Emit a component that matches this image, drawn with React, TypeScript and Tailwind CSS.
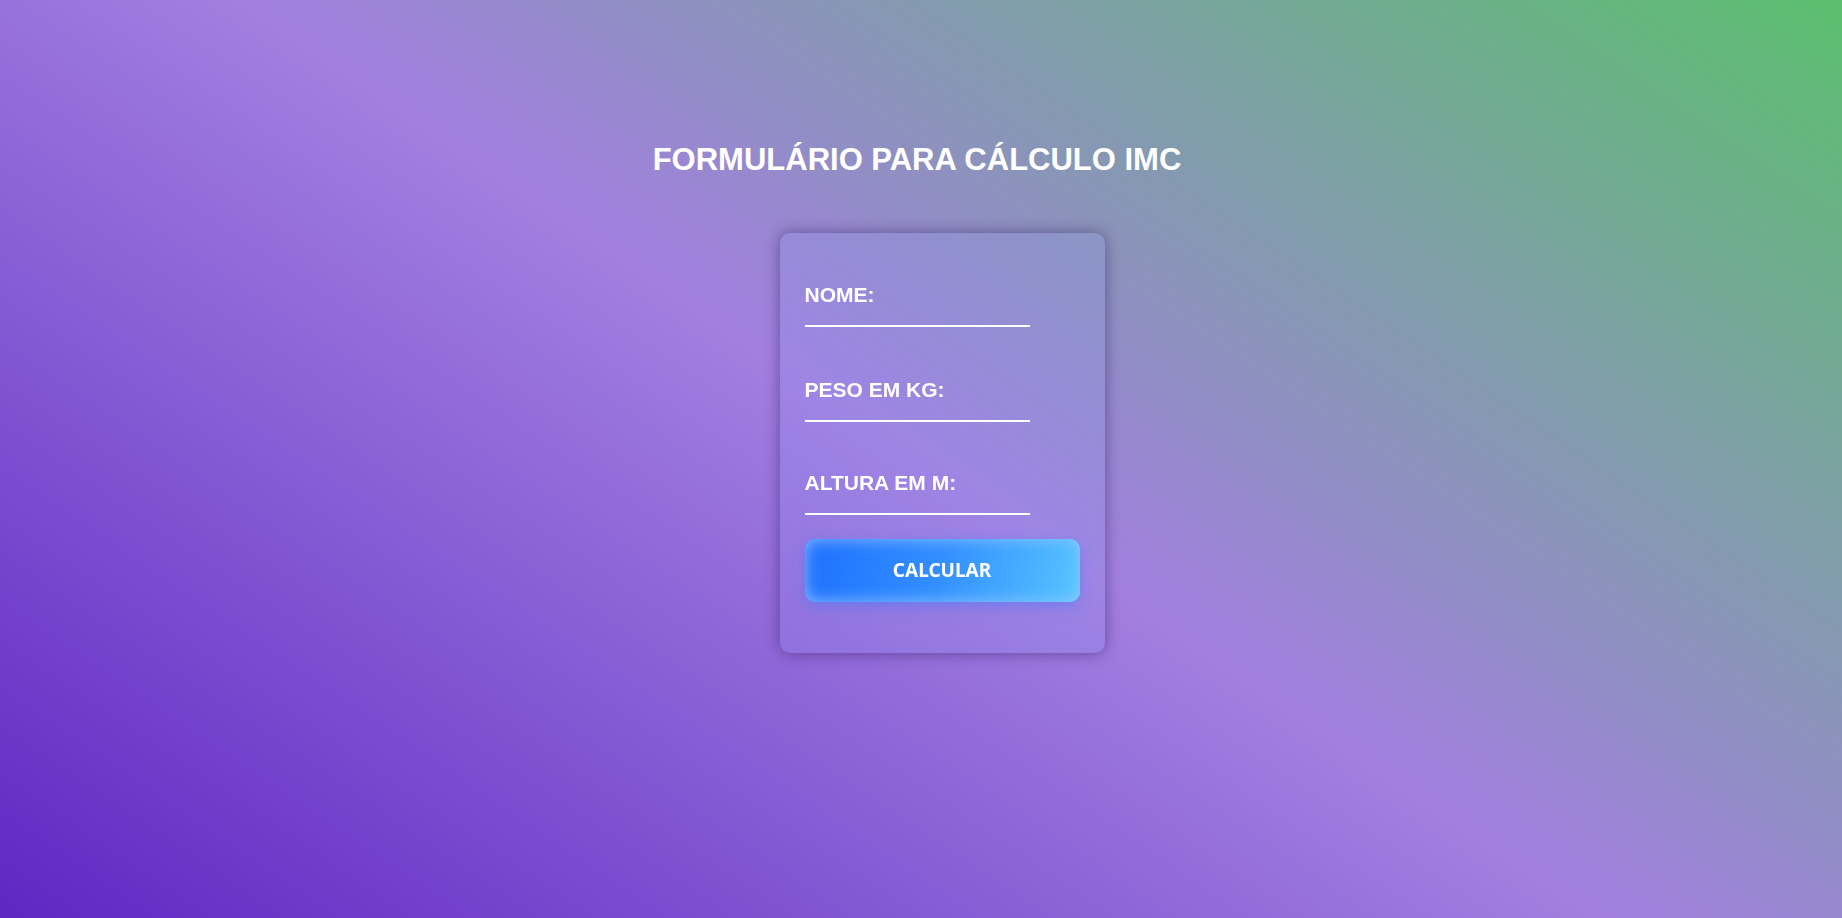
import { useState } from "react";

interface FieldProps {
  label: string;
  value: string;
  onChange: (v: string) => void;
}

function Field({ label, value, onChange }: FieldProps) {
  return (
    <div className="flex flex-col">
      <label className="text-[21px] leading-[24px] font-bold text-white">
        {label}
      </label>
      <input
        type="text"
        value={value}
        onChange={(e) => onChange(e.target.value)}
        className="w-[225px] h-[20px] bg-transparent border-0 border-b-2 border-white text-white outline-none"
      />
    </div>
  );
}

function App() {
  const [nome, setNome] = useState("");
  const [peso, setPeso] = useState("");
  const [altura, setAltura] = useState("");

  return (
    <div className="min-h-screen w-full bg-[linear-gradient(34deg,#5f27c3_0%,#a27fe0_50%,#5bbf6e_100%)] font-['Liberation_Sans',Arial,sans-serif]">
      <div className="flex flex-col items-center pt-[142px]">
        <h1 className="mr-[8px] text-[31px] leading-[36px] font-bold text-white">
          FORMULÁRIO PARA CÁLCULO IMC
        </h1>
        <form
          className="ml-[42px] mt-[55px] w-[325px] h-[420px] flex flex-col gap-[51px] px-[25px] pt-[50px] rounded-[10px] bg-[rgba(140,170,255,0.15)] backdrop-blur-sm shadow-[0_0_15px_rgba(30,10,70,0.45)]"
          onSubmit={(e) => e.preventDefault()}
        >
          <Field label="NOME:" value={nome} onChange={setNome} />
          <Field label="PESO EM KG:" value={peso} onChange={setPeso} />
          <div className="flex flex-col gap-[24px] -mt-[2px]">
            <Field label="ALTURA EM M:" value={altura} onChange={setAltura} />
            <button
              type="submit"
              className="h-[63px] w-full rounded-[10px] bg-[linear-gradient(105deg,#1f6fff_0%,#3390ff_50%,#56c6ff_100%)] shadow-[inset_0_0_16px_rgba(150,200,255,0.9),0_4px_14px_rgba(60,120,255,0.45)] text-white text-[19px] font-bold font-['Noto_Sans',sans-serif]"
            >
              CALCULAR
            </button>
          </div>
        </form>
      </div>
    </div>
  );
}

export default App;
